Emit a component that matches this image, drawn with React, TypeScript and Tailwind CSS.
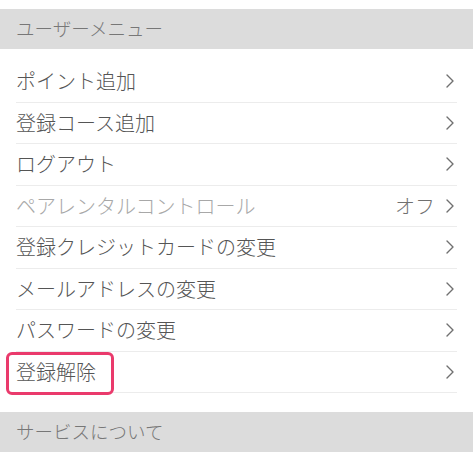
import React from "react";

const rows: { label: string; disabled?: boolean; value?: string; highlight?: boolean }[] = [
  { label: "ポイント追加" },
  { label: "登録コース追加" },
  { label: "ログアウト" },
  { label: "ペアレンタルコントロール", disabled: true, value: "オフ" },
  { label: "登録クレジットカードの変更" },
  { label: "メールアドレスの変更" },
  { label: "パスワードの変更" },
  { label: "登録解除", highlight: true },
];

function Chevron() {
  return (
    <svg width="10" height="16" viewBox="0 0 10 16" className="shrink-0">
      <path d="M2 2 L8 8 L2 14" fill="none" stroke="#707070" strokeWidth="1.4" strokeLinecap="round" strokeLinejoin="round" />
    </svg>
  );
}

export default function App() {
  return (
    <div
      className="w-[473px] h-[464px] bg-white overflow-hidden pt-[9px] font-light"
      style={{ fontFamily: '"Noto Sans CJK JP", "Noto Sans", sans-serif' }}
    >
      <div className="h-[40px] bg-[#dcdcdc] flex items-center pl-4 text-[18.5px] text-[#777777]">
        ユーザーメニュー
      </div>
      <div className="pt-[12px] pl-4 pr-4">
        {rows.map((r) => (
          <div
            key={r.label}
            className="relative h-[41.5px] flex items-center border-b border-[#ececec] text-[20px]"
          >
            <span className={r.disabled ? "text-[#a8a8a8]" : "text-[#555555]"}>{r.label}</span>
            <div className="ml-auto flex items-center gap-[10px] mr-[2px]">
              {r.value && <span className="text-[#707070] text-[20px]">{r.value}</span>}
              <Chevron />
            </div>
            {r.highlight && (
              <div className="absolute left-[-10px] top-[0px] w-[108px] h-[43px] border-[3px] border-[#ea3a6c] rounded-[6px]" />
            )}
          </div>
        ))}
      </div>
      <div className="mt-[19px] h-[40px] bg-[#dcdcdc] flex items-center pl-4 text-[18.5px] text-[#777777]">
        サービスについて
      </div>
    </div>
  );
}
